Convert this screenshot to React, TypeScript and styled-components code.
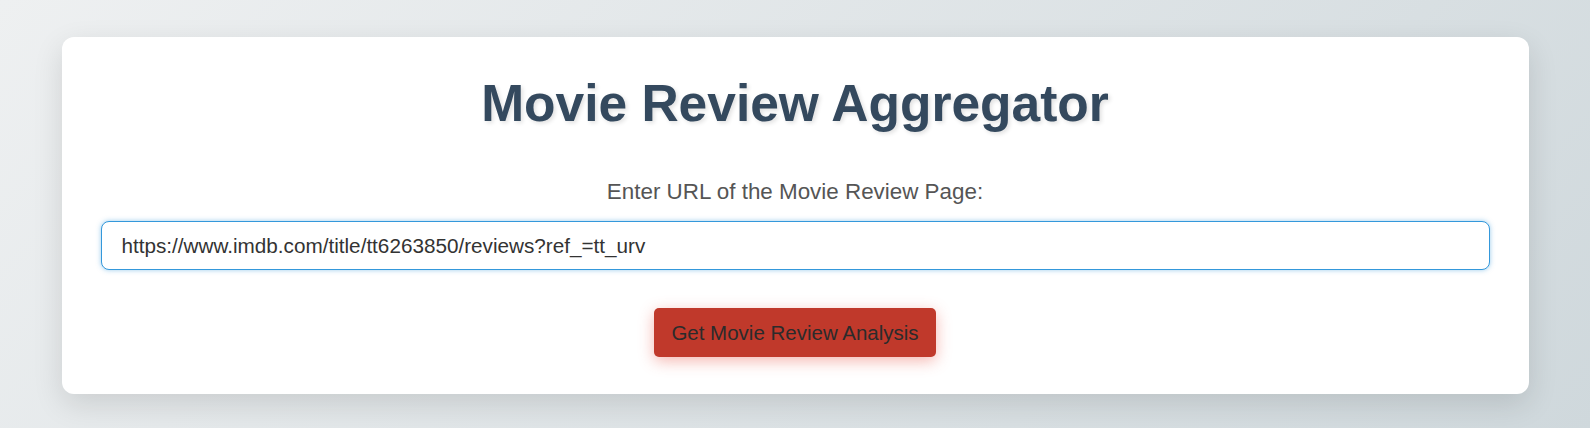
import React, { useState } from "react";
import styled, { createGlobalStyle } from "styled-components";

const GlobalStyle = createGlobalStyle`
  html, body {
    margin: 0;
    padding: 0;
    min-height: 100%;
  }
  body {
    min-height: 100vh;
    font-family: "Liberation Sans", Arial, sans-serif;
    background: linear-gradient(135deg, #eef0f1 0%, #cfd8dc 100%);
  }
`;

const Page = styled.div`
  min-height: 100vh;
  box-sizing: border-box;
  padding: 37px 0;
  display: flex;
  justify-content: center;
  align-items: flex-start;
`;

const Card = styled.div`
  width: 1467px;
  box-sizing: border-box;
  background: #ffffff;
  border-radius: 12px;
  box-shadow: 0 10px 30px rgba(0, 0, 0, 0.12);
  padding: 36px 39px 37px;
  display: flex;
  flex-direction: column;
  align-items: center;
`;

const Title = styled.h1`
  margin: 0 0 46px;
  font-size: 51.5px;
  font-weight: 700;
  color: #34495e;
  text-shadow: 2px 2px 4px rgba(0, 0, 0, 0.12);
`;

const Label = styled.label`
  font-size: 22.4px;
  color: #555555;
  margin-bottom: 16px;
`;

const Input = styled.input`
  width: 100%;
  box-sizing: border-box;
  height: 49px;
  padding: 0 20px;
  font-family: "Liberation Sans", Arial, sans-serif;
  font-size: 20.7px;
  color: #333333;
  border: 1px solid #3498db;
  border-radius: 8px;
  box-shadow: 0 0 5px rgba(52, 152, 219, 0.5);
  outline: none;
  margin-bottom: 38px;
`;

const Button = styled.button`
  height: 49px;
  padding: 0 17px;
  font-family: "Liberation Sans", Arial, sans-serif;
  font-size: 20.5px;
  color: #2b2b2b;
  background: #c0392b;
  border: none;
  border-radius: 5px;
  box-shadow: 0 4px 15px rgba(231, 76, 60, 0.4);
  cursor: pointer;
`;

export default function App() {
  const [url, setUrl] = useState(
    "https://www.imdb.com/title/tt6263850/reviews?ref_=tt_urv"
  );
  return (
    <>
      <GlobalStyle />
      <Page>
        <Card>
          <Title>Movie Review Aggregator</Title>
          <Label htmlFor="url">Enter URL of the Movie Review Page:</Label>
          <Input id="url" value={url} onChange={(e) => setUrl(e.target.value)} />
          <Button>Get Movie Review Analysis</Button>
        </Card>
      </Page>
    </>
  );
}
